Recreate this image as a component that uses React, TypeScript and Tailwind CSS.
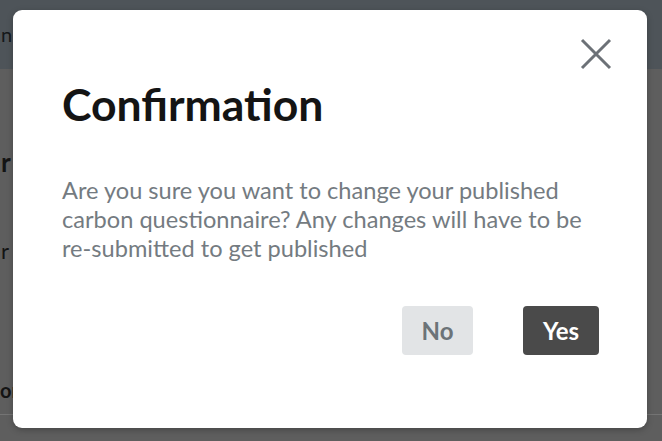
import React from 'react';

export default function App() {
  return (
    <div className="relative h-[441px] w-full overflow-hidden bg-[#5e5e5e] font-['Lato','Liberation_Sans',sans-serif]">
      {/* Page behind the dim layer */}
      <div className="flex h-[69px] items-center bg-[#4e5459] pl-[1px] pb-[2px] text-[20px] text-[#15181a]">
        n
      </div>
      <div className="flex flex-col">
        <p className="mt-[80px] pl-[1px] text-[26px] font-bold leading-[26px] text-[#141414]">r</p>
        <p className="mt-[64px] pl-[1px] text-[22px] leading-[24px] text-[#141414]">r t</p>
        <p className="mt-[116px] text-[20px] font-bold leading-[22px] text-[#141414]">or</p>
        <div className="mt-[13px] h-px w-full bg-[#747474]" />
      </div>

      {/* Dialog */}
      <div className="absolute inset-0 pl-[13px] pt-[10px]">
        <div className="relative flex h-[418px] w-[634px] flex-col rounded-[9px] bg-white pl-[49px] pr-[48px] pb-[73px] shadow-[0_2px_6px_rgba(0,0,0,0.25)]">
          <button className="absolute right-[35px] top-[28px] text-[#6c7177]" aria-label="Close">
            <svg width="32" height="32" viewBox="0 0 32 32" fill="none" stroke="currentColor" strokeWidth={3}>
              <path d="M2 2l28 28M30 2L2 30" />
            </svg>
          </button>
          <h2 className="mt-[67px] text-[44.5px] font-bold leading-[53px] text-[#141414]">Confirmation</h2>
          <p className="mt-[46px] text-[23.6px] leading-[29px] text-[#747b81]">
            Are you sure you want to change your published carbon questionnaire? Any changes will have to be
            re-submitted to get published
          </p>
          <div className="mt-auto flex justify-end gap-[50px]">
            <button className="h-[49px] w-[71px] rounded-[4px] bg-[#e2e4e6] text-[24px] font-bold text-[#6c7378]">
              No
            </button>
            <button className="h-[49px] w-[76px] rounded-[4px] bg-[#4a4a4a] text-[24px] font-bold text-white">
              Yes
            </button>
          </div>
        </div>
      </div>
    </div>
  );
}
